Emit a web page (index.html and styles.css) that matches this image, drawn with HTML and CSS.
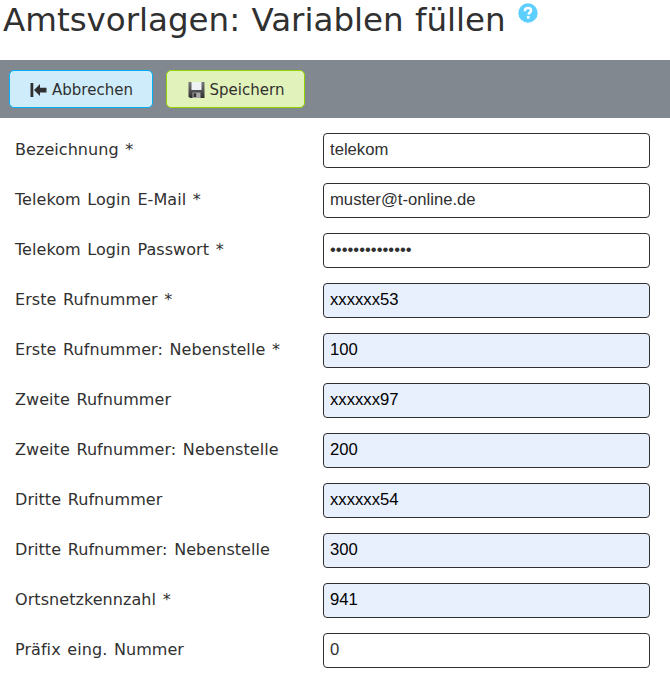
FILE: index.html
```html
<!DOCTYPE html>
<html lang="de">
<head>
<meta charset="utf-8">
<title>Amtsvorlagen: Variablen füllen</title>
<link rel="stylesheet" href="styles.css">
</head>
<body>
<header class="header">
  <h1 class="title">Amtsvorlagen: Variablen füllen</h1>
  <svg class="help" viewBox="0 0 20 20"><circle cx="10" cy="10" r="9.7" fill="#5ccfff"/><path d="M6.9 8.2V7.6C7 5.8 8.2 5.1 10 5.1s3.1.9 3.1 2.4c0 1.9-2.5 2-2.5 4.1" fill="none" stroke="#fff" stroke-width="2.5"/><path d="M8.9 13.1h2.7v2.5H8.9z" fill="#fff"/></svg>
</header>
<div class="toolbar">
  <button class="button cancel" type="button">
    <svg class="icon" viewBox="0 0 16 16"><path d="M0 1h2.8v14H0zM3.5 8l6-6v3.7H16v4.8H9.5V14z" fill="#303030"/></svg>
    <span>Abbrechen</span>
  </button>
  <button class="button save" type="button">
    <svg class="icon" viewBox="0 0 16 16"><defs><linearGradient id="metal" x2="0" y2="1"><stop stop-color="#777"/><stop offset="1" stop-color="#303030"/></linearGradient></defs><path d="M0 0h16v16H1.5L0 14.5z" fill="url(#metal)"/><path d="M3 0h10v8H3z" fill="#eef2f5"/><path d="M4 10.5h8V16H4z" fill="#aaa"/><path d="M5 11.3h2.7V15H5z" fill="#333"/></svg>
    <span>Speichern</span>
  </button>
</div>
<form class="form">
  <label class="label" for="f1">Bezeichnung *</label><input class="input" id="f1" value="telekom">
  <label class="label" for="f2">Telekom Login E-Mail *</label><input class="input" id="f2" value="muster@t-online.de">
  <label class="label" for="f3">Telekom Login Passwort *</label><input class="input" id="f3" type="text" value="••••••••••••••">
  <label class="label" for="f4">Erste Rufnummer *</label><input class="input filled" id="f4" value="xxxxxx53">
  <label class="label" for="f5">Erste Rufnummer: Nebenstelle *</label><input class="input filled" id="f5" value="100">
  <label class="label" for="f6">Zweite Rufnummer</label><input class="input filled" id="f6" value="xxxxxx97">
  <label class="label" for="f7">Zweite Rufnummer: Nebenstelle</label><input class="input filled" id="f7" value="200">
  <label class="label" for="f8">Dritte Rufnummer</label><input class="input filled" id="f8" value="xxxxxx54">
  <label class="label" for="f9">Dritte Rufnummer: Nebenstelle</label><input class="input filled" id="f9" value="300">
  <label class="label" for="f10">Ortsnetzkennzahl *</label><input class="input filled" id="f10" value="941">
  <label class="label" for="f11">Präfix eing. Nummer</label><input class="input" id="f11" value="0">
</form>
</body>
</html>
```
FILE: styles.css
```css
* { box-sizing: border-box; }
body {
  margin: 0;
  background: #fff;
  color: #303030;
  font-family: "DejaVu Sans", Verdana, sans-serif;
  font-size: 16px;
}
.header {
  display: flex;
  align-items: flex-start;
  height: 60px;
  padding: 0 3px;
  gap: 12px;
}
.title {
  margin: 0;
  font-size: 32.5px;
  line-height: 41px;
  font-weight: 400;
  word-spacing: 1px;
  white-space: nowrap;
}
.help { width: 20px; height: 20px; margin-top: 3px; flex: none; }
.toolbar {
  display: flex;
  align-items: center;
  gap: 13px;
  height: 58px;
  padding: 0 9px;
  background: #82888f;
}
.button {
  display: flex;
  align-items: center;
  justify-content: center;
  gap: 5px;
  height: 38px;
  padding: 2px 0 0 1px;
  border: 1px solid;
  border-radius: 5px;
  color: #303030;
  font: 15px "DejaVu Sans", Verdana, sans-serif;
}
.cancel { width: 144px; background: #ceecfa; border-color: #00aef5; }
.save { width: 139px; background: #e2f2bb; border-color: #92d400; }
.icon { width: 17px; height: 16px; flex: none; }
.form {
  display: grid;
  grid-template-columns: 308px 327px;
  grid-auto-rows: 35px;
  row-gap: 15px;
  padding: 15px;
}
.label {
  line-height: 33px;
  letter-spacing: 0.06px;
  word-spacing: 1.5px;
  white-space: nowrap;
  font-variant-ligatures: none;
}
.input {
  width: 327px;
  height: 35px;
  padding: 0 6px 2px;
  border: 1px solid #303030;
  border-radius: 4px;
  background: #fff;
  color: #303030;
  font: 16.67px "Liberation Sans", Arial, sans-serif;
}
.filled { background: #e8f0fe; color: #000; }
```
